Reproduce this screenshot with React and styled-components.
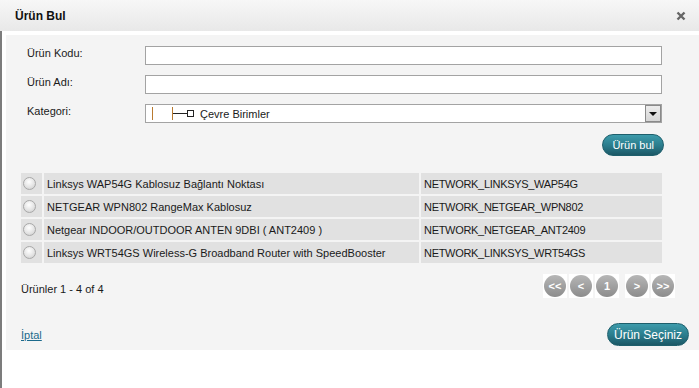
import React from "react";
import styled, { createGlobalStyle } from "styled-components";

const GlobalStyle = createGlobalStyle`
  html, body {
    margin: 0;
    padding: 0;
    background: #fff;
  }
  body {
    font-family: "Liberation Sans", Arial, sans-serif;
    font-size: 11px;
    color: #1a1a1a;
  }
`;

const Dialog = styled.div`
  width: 699px;
  height: 388px;
  display: flex;
  flex-direction: column;
  overflow: hidden;
  background: #fff;
`;

const Header = styled.div`
  height: 31px;
  flex-shrink: 0;
  display: flex;
  align-items: center;
  justify-content: space-between;
  padding: 0 13px 0 15px;
  background: linear-gradient(#f7f7f7, #e8e8e8);
`;

const Title = styled.h1`
  margin: 0;
  font-size: 12px;
  font-weight: bold;
  color: #111;
`;

const Close = styled.button`
  border: 0;
  padding: 0;
  background: none;
  display: flex;
  cursor: pointer;
`;

const Body = styled.div`
  flex: 1;
  border-left: 2px solid #7c7c7c;
  padding: 4px 0 0 4px;
`;

const Panel = styled.div`
  background: #f4f4f4;
  padding: 11px 0 4px 15px;
`;

const FieldRow = styled.div`
  display: flex;
  align-items: flex-start;
  padding-left: 6px;
  margin-bottom: 10px;
  &:last-child {
    margin-bottom: 0;
  }
`;

const Label = styled.label`
  width: 118px;
  line-height: 15px;
  color: #1a1a1a;
`;

const TextInput = styled.input`
  box-sizing: border-box;
  width: 517px;
  height: 19px;
  margin: 0;
  border: 1px solid #a3a3a3;
  background: #fff;
  outline: none;
`;

const Select = styled.div`
  box-sizing: border-box;
  width: 517px;
  height: 19px;
  border: 1px solid #a3a3a3;
  background: #fff;
  display: flex;
  align-items: center;
`;

const TreeBar = styled.span`
  width: 1px;
  height: 13px;
  background: #b97a30;
  margin-left: ${(p) => p.$left}px;
`;

const TreeDash = styled.span`
  width: 14px;
  height: 1px;
  background: #222;
`;

const TreeBox = styled.span`
  box-sizing: border-box;
  width: 7px;
  height: 7px;
  border: 1px solid #222;
  margin-right: 6px;
`;

const SelectText = styled.span`
  flex: 1;
`;

const Arrow = styled.span`
  box-sizing: border-box;
  width: 16px;
  height: 17px;
  border: 1px solid #8a8a8a;
  background: linear-gradient(#ececec, #d6d6d6);
  display: flex;
  align-items: center;
  justify-content: center;
  &::after {
    content: "";
    border-left: 4px solid transparent;
    border-right: 4px solid transparent;
    border-top: 4px solid #111;
  }
`;

const Actions = styled.div`
  width: ${(p) => p.$width}px;
  display: flex;
  justify-content: ${(p) => p.$justify || "flex-end"};
  align-items: center;
  margin-top: ${(p) => p.$top}px;
`;

const TealButton = styled.button`
  height: ${(p) => p.$height}px;
  padding: 0 ${(p) => p.$pad}px;
  border: 1px solid #1e5f6c;
  border-radius: 12px;
  background: linear-gradient(#3d9bab, #2a7b8b 55%, #1c5866);
  color: #fff;
  font-family: "Liberation Sans", Arial, sans-serif;
  font-size: ${(p) => p.$size}px;
  cursor: pointer;
`;

const Grid = styled.div`
  width: 641px;
  margin-top: 17px;
  display: grid;
  grid-template-columns: 21px 375px 241px;
  grid-auto-rows: 21px;
  column-gap: 2px;
  row-gap: 2px;
`;

const Cell = styled.div`
  background: #e1e1e1;
  display: flex;
  align-items: center;
  padding-left: ${(p) => (p.$radio ? 2 : 3)}px;
  white-space: nowrap;
  overflow: hidden;
  color: #1a1a1a;
  letter-spacing: ${(p) => (p.$code ? "-0.3px" : "0")};
`;

const Radio = styled.span`
  box-sizing: border-box;
  width: 13px;
  height: 13px;
  border-radius: 50%;
  border: 1px solid #a8a8a8;
  background: radial-gradient(circle at 45% 35%, #ffffff, #e4e4e4 55%, #c8c8c8);
`;

const PagerRow = styled.div`
  width: 654px;
  margin-top: 11px;
  display: flex;
  justify-content: space-between;
  align-items: flex-start;
`;

const Summary = styled.span`
  padding-top: 8px;
  line-height: 14px;
`;

const Pager = styled.div`
  display: flex;
  gap: 2px;
`;

const PageButton = styled.span`
  width: 24px;
  height: 24px;
  background: #fff;
  display: flex;
  align-items: center;
  justify-content: center;
  margin-left: ${(p) => (p.$spaced ? 4 : 0)}px;
  &::before {
    content: "${(p) => p.$label}";
    width: 22px;
    height: 22px;
    border-radius: 50%;
    background: linear-gradient(#b6b6b6, #8c8c8c);
    color: #fff;
    font-size: 11px;
    font-weight: bold;
    line-height: 22px;
    text-align: center;
  }
`;

const CancelLink = styled.a`
  color: #1b6a8c;
  text-decoration: underline;
  cursor: pointer;
`;

const products = [
  ["Linksys WAP54G Kablosuz Bağlantı Noktası", "NETWORK_LINKSYS_WAP54G"],
  ["NETGEAR WPN802 RangeMax Kablosuz", "NETWORK_NETGEAR_WPN802"],
  ["Netgear INDOOR/OUTDOOR ANTEN 9DBI ( ANT2409 )", "NETWORK_NETGEAR_ANT2409"],
  ["Linksys WRT54GS Wireless-G Broadband Router with SpeedBooster", "NETWORK_LINKSYS_WRT54GS"],
];

const pages = [
  { label: "<<" },
  { label: "<" },
  { label: "1" },
  { label: ">", spaced: true },
  { label: ">>" },
];

const App = () => {
  return (
    <>
      <GlobalStyle />
      <Dialog>
        <Header>
          <Title>Ürün Bul</Title>
          <Close aria-label="Kapat">
            <svg width="10" height="10" viewBox="0 0 10 10">
              <path d="M1.5 1.5 L8.5 8.5 M8.5 1.5 L1.5 8.5" stroke="#666" strokeWidth="2.4" />
            </svg>
          </Close>
        </Header>
        <Body>
          <Panel>
            <div>
              <FieldRow>
                <Label>Ürün Kodu:</Label>
                <TextInput />
              </FieldRow>
              <FieldRow>
                <Label>Ürün Adı:</Label>
                <TextInput />
              </FieldRow>
              <FieldRow>
                <Label>Kategori:</Label>
                <Select>
                  <TreeBar $left={6} />
                  <TreeBar $left={19} />
                  <TreeDash />
                  <TreeBox />
                  <SelectText>Çevre Birimler</SelectText>
                  <Arrow />
                </Select>
              </FieldRow>
            </div>

            <Actions $width={643} $top={11}>
              <TealButton $height={22} $pad={9} $size={11}>
                Ürün bul
              </TealButton>
            </Actions>

            <Grid>
              {products.map(([name, code]) => (
                <React.Fragment key={code}>
                  <Cell $radio>
                    <Radio />
                  </Cell>
                  <Cell>{name}</Cell>
                  <Cell $code>{code}</Cell>
                </React.Fragment>
              ))}
            </Grid>

            <PagerRow>
              <Summary>Ürünler 1 - 4 of 4</Summary>
              <Pager>
                {pages.map((p) => (
                  <PageButton key={p.label} $label={p.label} $spaced={p.spaced} />
                ))}
              </Pager>
            </PagerRow>

            <Actions $width={668} $top={25} $justify="space-between">
              <CancelLink>İptal</CancelLink>
              <TealButton $height={23} $pad={6} $size={12}>
                Ürün Seçiniz
              </TealButton>
            </Actions>
          </Panel>
        </Body>
      </Dialog>
    </>
  );
};

export default App;
